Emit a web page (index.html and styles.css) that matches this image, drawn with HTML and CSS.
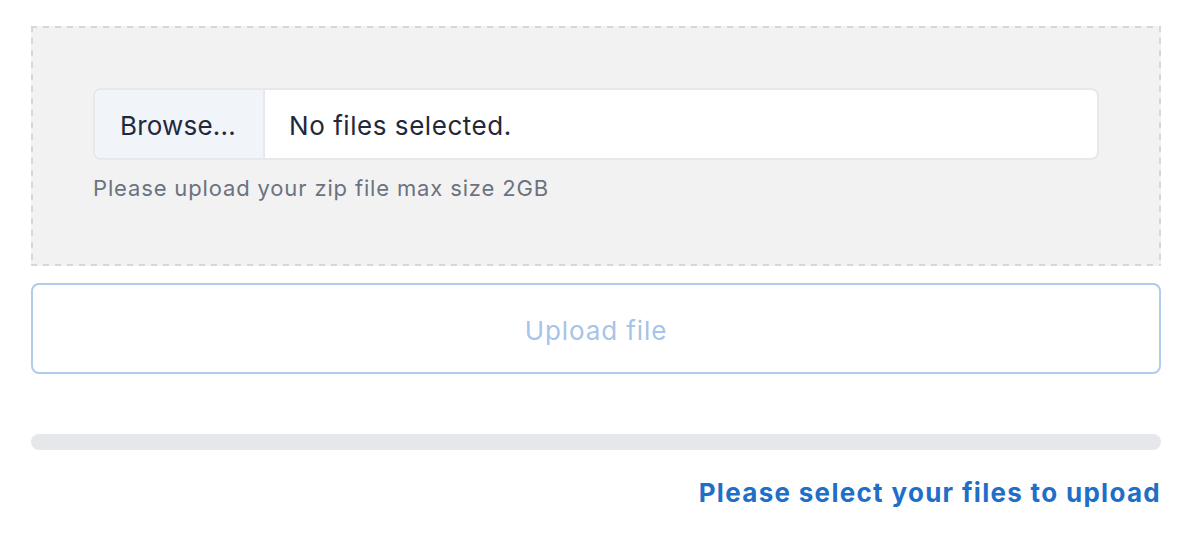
FILE: index.html
```html
<!DOCTYPE html>
<html lang="en">
<head>
<meta charset="utf-8">
<title>Upload</title>
<link rel="stylesheet" href="styles.css">
</head>
<body>
<div class="uploader">
  <div class="dropzone">
    <div class="file-input">
      <span class="browse">Browse...</span>
      <span class="file-name">No files selected.</span>
    </div>
    <p class="help">Please upload your zip file max size 2GB</p>
  </div>
  <button class="upload-btn" type="button" disabled>Upload file</button>
  <div class="progress"><div class="progress-fill" style="width:0%"></div></div>
  <p class="status">Please select your files to upload</p>
</div>
</body>
</html>
```
FILE: styles.css
```css
html, body {
  margin: 0;
  padding: 0;
  background: #ffffff;
}
body {
  font-family: Inter, "Noto Sans", "Liberation Sans", sans-serif;
}
.uploader {
  width: 1130px;
  margin: 26px 0 0 31px;
  display: flex;
  flex-direction: column;
}
.dropzone {
  box-sizing: border-box;
  height: 240px;
  padding: 62px 62px 0 62px;
  background:
    repeating-linear-gradient(90deg, #d8d8d8 0 6px, transparent 6px 12px) left top / 100% 2px no-repeat,
    repeating-linear-gradient(90deg, #d8d8d8 0 6px, transparent 6px 12px) left bottom / 100% 2px no-repeat,
    repeating-linear-gradient(180deg, #d8d8d8 0 6px, transparent 6px 12px) left top / 2px 100% no-repeat,
    repeating-linear-gradient(180deg, #d8d8d8 0 6px, transparent 6px 12px) right top / 2px 100% no-repeat,
    #f2f2f2;
}
.file-input {
  box-sizing: border-box;
  height: 72px;
  width: 1006px;
  display: flex;
  border: 2px solid #e6e8ec;
  border-radius: 8px;
  background: #ffffff;
  overflow: hidden;
}
.browse {
  display: flex;
  align-items: center;
  box-sizing: border-box;
  width: 170px;
  padding: 3px 0 0 25px;
  background: #f1f4f9;
  border-right: 2px solid #e6e8ec;
  font-size: 26px;
  letter-spacing: 0.2px;
  color: #1e293b;
}
.file-name {
  display: flex;
  align-items: center;
  padding: 3px 0 0 24px;
  font-size: 26px;
  letter-spacing: 0.55px;
  color: #1e293b;
}
.help {
  margin: 15px 0 0 0;
  font-size: 22px;
  letter-spacing: 0.85px;
  color: #6b7280;
}
.upload-btn {
  margin-top: 17px;
  height: 91px;
  background: #ffffff;
  border: 2px solid #b0cbed;
  border-radius: 8px;
  font-family: inherit;
  font-size: 26px;
  letter-spacing: 0.9px;
  color: #a6c4e9;
  padding: 3px 0 0 0;
}
.progress {
  margin-top: 60px;
  height: 16px;
  border-radius: 8px;
  background: #e5e7eb;
  overflow: hidden;
}
.progress-fill {
  height: 100%;
  background: #1f6fc8;
}
.status {
  margin: 27px 0 0 0;
  text-align: right;
  font-size: 26px;
  font-weight: 700;
  letter-spacing: 1.3px;
  color: #1f6fc8;
}
```
